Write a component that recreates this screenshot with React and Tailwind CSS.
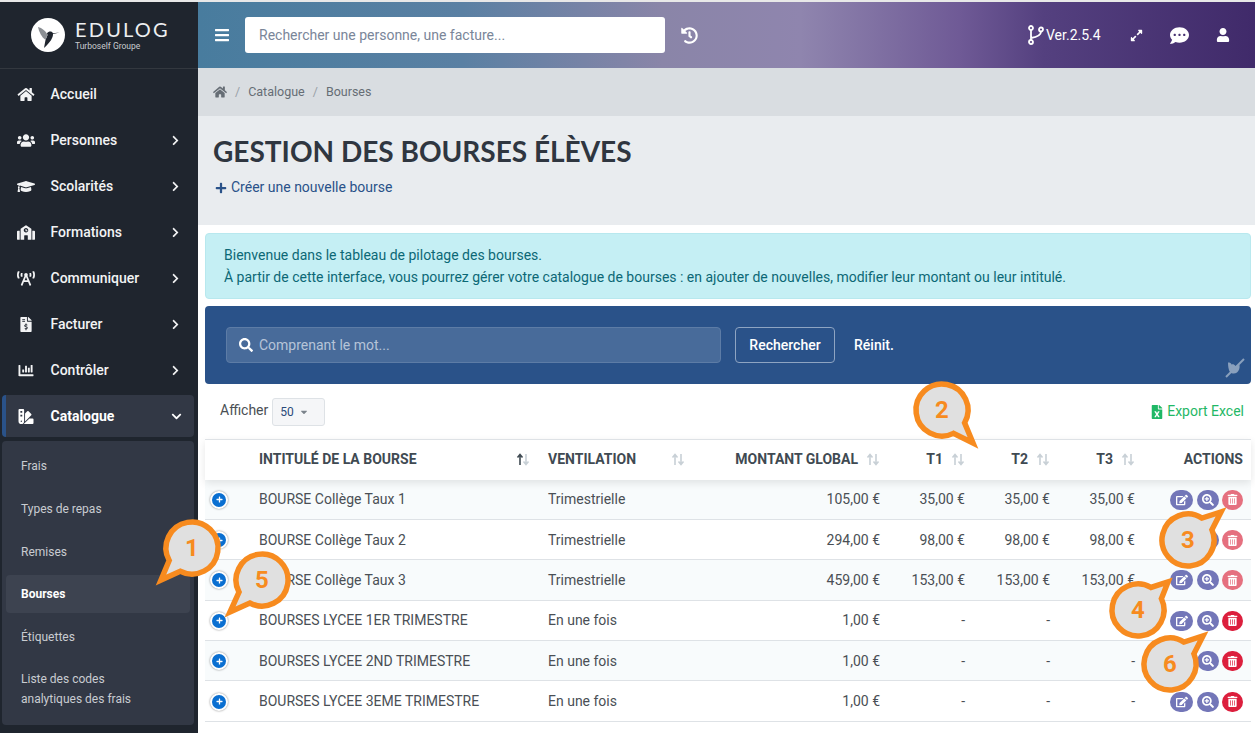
import {
  FaBars, FaChartBar, FaChevronDown, FaChevronRight, FaCommentDots, FaEdit, FaExpandAlt,
  FaFileExcel, FaFileInvoiceDollar, FaGraduationCap, FaHistory, FaHome, FaPlus, FaSchool, FaSearch,
  FaSearchPlus, FaSwatchbook, FaTrashAlt, FaUser, FaUsers, FaBroadcastTower, FaCaretDown,
} from "react-icons/fa";

const menu = [
  { label: "Accueil", icon: FaHome },
  { label: "Personnes", icon: FaUsers, arrow: true },
  { label: "Scolarités", icon: FaGraduationCap, arrow: true },
  { label: "Formations", icon: FaSchool, arrow: true },
  { label: "Communiquer", icon: FaBroadcastTower, arrow: true },
  { label: "Facturer", icon: FaFileInvoiceDollar, arrow: true },
  { label: "Contrôler", icon: FaChartBar, arrow: true },
];

const rows = [
  { name: "BOURSE Collège Taux 1", vent: "Trimestrielle", total: "105,00 €", t: "35,00 €", faded: true },
  { name: "BOURSE Collège Taux 2", vent: "Trimestrielle", total: "294,00 €", t: "98,00 €", faded: true },
  { name: "BOURSE Collège Taux 3", vent: "Trimestrielle", total: "459,00 €", t: "153,00 €", faded: true },
  { name: "BOURSES LYCEE 1ER TRIMESTRE", vent: "En une fois", total: "1,00 €", t: "-" },
  { name: "BOURSES LYCEE 2ND TRIMESTRE", vent: "En une fois", total: "1,00 €", t: "-" },
  { name: "BOURSES LYCEE 3EME TRIMESTRE", vent: "En une fois", total: "1,00 €", t: "-" },
];

const cols = "grid grid-cols-[44px_289px_157px_195px_85px_85px_85px_106px] items-center";

const SortIcon = ({ active }) => (
  <svg width="14" height="13" viewBox="0 0 14 13" className="shrink-0">
    <path d="M4 12V2M1.500 4.500 4 1.500l2.500 3" fill="none" stroke={active ? "#3f4a52" : "#c8d0d6"} strokeWidth="1.600" />
    <path d="M10 1v10M7.500 8.500 10 11.500l2.500-3" fill="none" stroke="#c8d0d6" strokeWidth="1.600" />
  </svg>
);

const Bubble = ({ n, dx, dy, className }) => {
  // bubble outline with its tail pointing at (dx, dy)
  const r = 26;
  const angle = Math.atan2(dy, dx);
  const a = angle + 0.3;
  const b = angle - 0.3;
  const d = `M${r * Math.cos(a)} ${r * Math.sin(a)} A${r} ${r} 0 1 1 ${r * Math.cos(b)} ${r * Math.sin(b)} L${dx} ${dy} Z`;
  return (
    <div className={`absolute w-[120px] h-[120px] flex items-center justify-center pointer-events-none ${className}`}>
      <svg width="120" height="120" viewBox="-60 -60 120 120" className="absolute inset-0">
        <path d={d} fill="#e0e0e0" stroke="#f78b1f" strokeWidth="5.500" strokeMiterlimit="12" />
      </svg>
      <span className="relative text-[24px] font-bold text-[#f78b1f] font-['Roboto',sans-serif]">{n}</span>
    </div>
  );
};

const Logo = () => (
  <svg width="34" height="34" viewBox="0 0 34 34" className="shrink-0">
    <circle cx="17" cy="17" r="17" fill="#fff" />
    <path d="M28.500 14.500 22 15.200C21 13 17.500 13 16 15.500l.5 1.500-2 5L13 30c3-3 7-6.500 8.500-11 .5-1.500.5-2.500.5-3z" fill="#1f252e" />
    <path d="M7 9c4 1 8 4 9.500 8l-2 5C10.500 19 8 14 7 9z" fill="#8b8f94" />
  </svg>
);

const BranchIcon = () => (
  <svg width="16" height="20" viewBox="0 0 16 20" fill="none" stroke="#fff" strokeWidth="1.800" className="ml-[330px] shrink-0">
    <circle cx="3" cy="3" r="2" />
    <circle cx="13" cy="4.500" r="2" />
    <circle cx="3" cy="17" r="2" />
    <path d="M3 5v10M13 6.500c0 3.500-4 5.500-10 6.500" />
  </svg>
);

const App = () => {
  return (
    <div className="relative h-[733px] w-[1255px] overflow-hidden bg-white font-['Roboto',sans-serif] text-[14px] text-[#4a4f55]">
      <div className="h-[2px] bg-[#e8e8e8]" />
      <div className="flex h-[731px]">
        {/* sidebar */}
        <aside className="flex w-[198px] shrink-0 flex-col bg-[#1f252e] text-white">
          <div className="flex h-[67px] items-center border-b border-[#33383f] pl-[31px] gap-[10px]">
            <Logo />
            <div className="flex flex-col">
              <span className="font-['Lato',sans-serif] text-[20px] leading-[21px] tracking-[0.11em] text-[#eceef0]">EDULOG</span>
              <span className="text-[8.500px] leading-[10px] mt-[1px] text-[#c9ccd0]">Turboself Groupe</span>
            </div>
          </div>
          <nav className="flex flex-col pt-[2px]">
            {menu.map((item) => (
              <div key={item.label} className="flex h-[46px] items-center pl-[17px] pr-[17px] font-medium text-[#f2f3f4]">
                <item.icon className="w-[18px] text-[15px] shrink-0" />
                <span className="ml-[15.500px] flex-1">{item.label}</span>
                {item.arrow && <FaChevronRight className="text-[11px]" />}
              </div>
            ))}
          </nav>
          <div className="mx-[2px] mt-[2px] flex h-[42px] w-[192px] items-center rounded-[4px] border-l-4 border-[#2a5289] bg-[#323845] pl-[11px] pr-[12px] font-bold text-white">
            <FaSwatchbook className="w-[18px] text-[15px] shrink-0" />
            <span className="ml-[15.500px] flex-1">Catalogue</span>
            <FaChevronDown className="text-[11px]" />
          </div>
          <div className="mx-[2px] mt-[4px] flex h-[284px] w-[192px] flex-col gap-[4px] rounded-[4px] bg-[#323845] px-[4px] pt-[5px] text-[12px] text-[#c9ccd1]">
            <div className="flex h-[39px] items-center px-[15px]">Frais</div>
            <div className="flex h-[39px] items-center px-[15px]">Types de repas</div>
            <div className="flex h-[39px] items-center px-[15px]">Remises</div>
            <div className="flex h-[38px] items-center rounded-[4px] bg-[#3d4350] px-[15px] font-bold text-white">Bourses</div>
            <div className="flex h-[39px] items-center px-[15px]">Étiquettes</div>
            <div className="px-[15px] pt-[9px] leading-[20px]">Liste des codes<br />analytiques des frais</div>
          </div>
        </aside>

        <main className="flex min-w-0 flex-1 flex-col">
          {/* top bar */}
          <header className="flex h-[66px] shrink-0 items-center bg-[linear-gradient(90deg,#487c9e_0%,#5a80a3_25%,#8a85a8_44%,#8f85ae_57%,#6f5a96_72%,#54407f_80%,#402a6a_100%)] text-white">
            <FaBars className="ml-[16px] text-[16px]" />
            <input
              readOnly
              placeholder="Rechercher une personne, une facture..."
              className="ml-[15px] h-[36px] w-[420px] rounded-[3px] bg-white px-[14px] text-[14px] outline-none placeholder:text-[#7a8699]"
            />
            <FaHistory className="ml-[16px] text-[17px]" />
            <BranchIcon />
            <span className="ml-[2px]">Ver.2.5.4</span>
            <FaExpandAlt className="ml-[29px] text-[13px]" />
            <FaCommentDots className="ml-[27px] text-[19px]" />
            <FaUser className="ml-[27px] text-[14px]" />
          </header>

          {/* breadcrumb */}
          <div className="flex h-[48px] shrink-0 items-center gap-[8px] bg-[#d9dde1] pl-[15px] text-[12.500px] text-[#666d75]">
            <FaHome className="text-[14px]" />
            <span className="text-[#9aa1a8]">/</span>
            <span>Catalogue</span>
            <span className="text-[#9aa1a8]">/</span>
            <span>Bourses</span>
          </div>

          {/* page title */}
          <div className="h-[109px] shrink-0 bg-[#e9ecef] pl-[15px] pt-[17px]">
            <h1 className="font-['Lato',sans-serif] text-[28px] leading-[36px] font-bold text-[#2f3640]">GESTION DES BOURSES ÉLÈVES</h1>
            <div className="mt-[8px] flex items-center gap-[4px] pl-[2px] text-[#2a5289]">
              <FaPlus className="text-[12px]" />
              <span>Créer une nouvelle bourse</span>
            </div>
          </div>

          <div className="flex flex-col pl-[7px] pr-[4px] pt-[8px]">
            <div className="h-[66px] rounded-[4px] border border-[#b8e8ee] bg-[#c5eff4] pl-[18px] pt-[10px] leading-[22px] text-[#0c6876]">
              <p>Bienvenue dans le tableau de pilotage des bourses.</p>
              <p>À partir de cette interface, vous pourrez gérer votre catalogue de bourses : en ajouter de nouvelles, modifier leur montant ou leur intitulé.</p>
            </div>

            {/* search panel */}
            <div className="relative mt-[7px] flex h-[78px] items-center rounded-[4px] bg-[#2a5289] pl-[21px]">
              <div className="flex h-[36px] w-[495px] items-center gap-[6px] rounded-[4px] border border-[#5d7ca6] bg-[#486b9a] pl-[12px] text-[#b6c4d8]">
                <FaSearch className="text-[14px] text-white" />
                <span>Comprenant le mot...</span>
              </div>
              <div className="ml-[14px] flex h-[36px] w-[100px] items-center justify-center rounded-[4px] border border-[#8ea4c2] font-medium text-white">Rechercher</div>
              <span className="ml-[19px] font-medium text-white">Réinit.</span>
              <svg width="20" height="20" viewBox="0 0 20 20" className="absolute bottom-[6px] right-[6px]">
                <path d="M3 4.500c2 0 3 .5 3.500 2 1.500-.5 3 0 4 1.500l4-1c.5 3-.5 6-2.500 7.500-2 1.500-5 1.500-7-.5C3.500 12 3 8 3 4.500z" fill="#8aa0bd" />
                <path d="M1 19 19 1" stroke="#8aa0bd" strokeWidth="2" />
              </svg>
            </div>

            {/* toolbar */}
            <div className="flex h-[55px] items-center justify-between pl-[15px] pr-[7px]">
              <div className="flex items-center gap-[4px]">
                <span className="relative top-[-1px]">Afficher</span>
                <div className="flex h-[28px] w-[53px] items-center gap-[5px] rounded-[3px] border border-[#dee2e6] bg-[#f5f6f8] pl-[7px] text-[12px] text-[#2a4a7a]">
                  50 <FaCaretDown className="text-[10px] text-[#7b838b]" />
                </div>
              </div>
              <div className="flex items-center gap-[3px] text-[#1fb866]">
                <FaFileExcel className="text-[14px]" />
                <span>Export Excel</span>
              </div>
            </div>

            {/* table */}
            <div className={`${cols} relative h-[40.500px] border-t border-[#dee2e6] font-bold text-[#3f4a52] shadow-[0_3px_8px_rgba(0,0,0,0.1)]`}>
              <div />
              <div className="flex items-center justify-between pl-[10px] pr-[8px]">INTITULÉ DE LA BOURSE <SortIcon active /></div>
              <div className="flex items-center justify-between pl-[10px] pr-[10px]">VENTILATION <SortIcon /></div>
              <div className="flex items-center justify-end gap-[8px] pr-[10px]">MONTANT GLOBAL <SortIcon /></div>
              <div className="flex items-center justify-end gap-[8px] pr-[10px]">T1 <SortIcon /></div>
              <div className="flex items-center justify-end gap-[8px] pr-[10px]">T2 <SortIcon /></div>
              <div className="flex items-center justify-end gap-[8px] pr-[10px]">T3 <SortIcon /></div>
              <div className="pr-[8px] text-right">ACTIONS</div>
            </div>
            {rows.map((row, i) => (
              <div key={row.name} className={`${cols} h-[40.400px] border-b border-[#dee2e6] pt-[1px] ${i % 2 === 0 ? "bg-[#f8fbfc]" : "bg-white"}`}>
                <div className="pl-[5px]">
                  <div className="flex h-[18px] w-[18px] items-center justify-center rounded-full border-2 border-white bg-[#0a6fd1] text-white shadow-[0_0_2px_rgba(0,0,0,0.5)]">
                    <FaPlus className="text-[7px]" />
                  </div>
                </div>
                <div className="pl-[10px]">{row.name}</div>
                <div className="pl-[10px]">{row.vent}</div>
                <div className="pr-[10px] text-right">{row.total}</div>
                <div className="pr-[10px] text-right">{row.t}</div>
                <div className="pr-[10px] text-right">{row.t}</div>
                <div className="pr-[10px] text-right">{row.t}</div>
                <div className="flex items-center justify-end gap-[3px] pr-[8px] text-white">
                  <div className="mr-[1px] flex h-[20px] w-[23px] items-center justify-center rounded-full bg-[#7376b8]"><FaEdit className="text-[12px]" /></div>
                  <div className="flex h-[20px] w-[22px] items-center justify-center rounded-full bg-[#7376b8]"><FaSearchPlus className="text-[12px]" /></div>
                  <div className={`flex h-[20px] w-[21px] items-center justify-center rounded-full ${row.faded ? "bg-[#e5707f]" : "bg-[#dc1f3d]"}`}><FaTrashAlt className="text-[11px]" /></div>
                </div>
              </div>
            ))}
          </div>
        </main>
      </div>

      {/* numbered callouts over the page */}
      <Bubble n="1" dx={-31} dy={32} className="left-[132px] top-[488px]" />
      <Bubble n="5" dx={-32} dy={32} className="left-[202px] top-[520px]" />
      <Bubble n="2" dx={31} dy={33} className="left-[882px] top-[350px]" />
      <Bubble n="3" dx={33} dy={-28} className="left-[1128px] top-[480px]" />
      <Bubble n="4" dx={30} dy={-28} className="left-[1078px] top-[550px]" />
      <Bubble n="6" dx={33} dy={-28} className="left-[1110px] top-[604px]" />
    </div>
  );
};

export default App;
